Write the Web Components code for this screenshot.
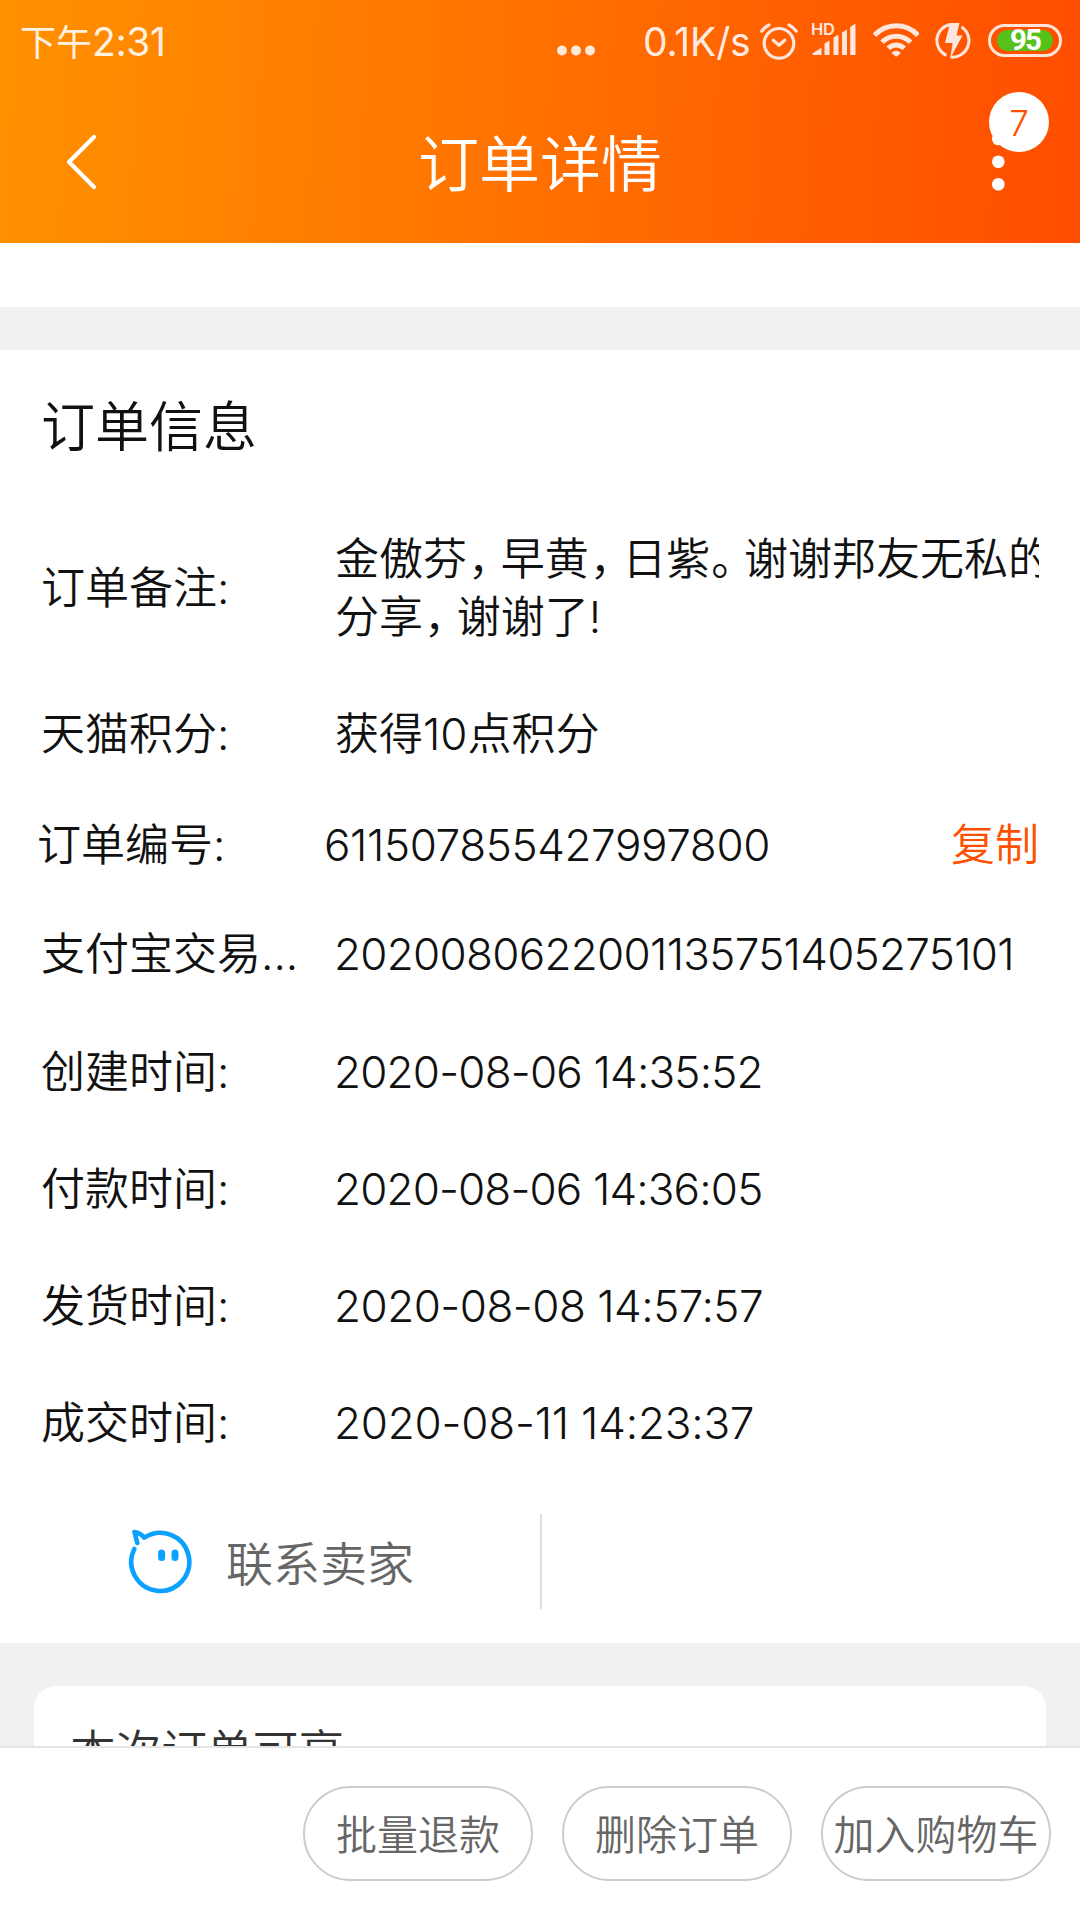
<!DOCTYPE html>
<html lang="zh-CN">
<head>
<meta charset="utf-8">
<title>订单详情</title>
<style>
  body {
    margin: 0;
    background: #fff;
  }
</style>
</head>
<body>
<order-page>
  <status-bar slot="top" time="下午2:31" speed="0.1K/s" battery="95"></status-bar>
  <nav-bar slot="top" badge="7">订单详情</nav-bar>

  <order-section heading="订单信息">
    <info-row label="订单备注:" style="--h: 170px">金傲芬<punct-mark>，</punct-mark>早黄<punct-mark>，</punct-mark>日紫<punct-mark>。</punct-mark>谢谢邦友无私的<br>分享<punct-mark>，</punct-mark>谢谢了!</info-row>
    <info-row label="天猫积分:" style="--h: 122px">获得10点积分</info-row>
    <info-row label="订单编号:" action="复制" style="--h: 99px; --left: 37px; --label: 287px; --track: -0.38px">611507855427997800</info-row>
    <info-row label="支付宝交易..." style="--h: 119px; --label: 293px; --track: -0.7px">2020080622001135751405275101</info-row>
    <info-row label="创建时间:" style="--label: 293px; --track: -0.8px">2020-08-06 14:35:52</info-row>
    <info-row label="付款时间:" style="--label: 293px; --track: -0.85px">2020-08-06 14:36:05</info-row>
    <info-row label="发货时间:" style="--label: 293px; --track: -0.5px">2020-08-08 14:57:57</info-row>
    <info-row label="成交时间:" style="--label: 293px; --track: -0.2px">2020-08-11 14:23:37</info-row>
    <contact-seller slot="footer">联系卖家</contact-seller>
  </order-section>

  <promo-card>本次订单可享</promo-card>

  <action-bar slot="bottom">
    <pill-button>批量退款</pill-button>
    <pill-button>删除订单</pill-button>
    <pill-button>加入购物车</pill-button>
  </action-bar>
</order-page>

<script>
  const define = (name, html, setup) => {
    const template = document.createElement("template");
    template.innerHTML = html;
    customElements.define(name, class extends HTMLElement {
      constructor() {
        super();
        this.attachShadow({ mode: "open" }).appendChild(template.content.cloneNode(true));
      }

      connectedCallback() {
        if (setup) setup(this, (selector) => this.shadowRoot.querySelector(selector));
      }
    });
  };

  define("order-page", `
    <style>
      :host {
        display: flex;
        flex-direction: column;
        width: 1080px;
        height: 1920px;
        overflow: hidden;
        background: #f1f1f1;
        color: #111;
        font: 350 44px/58px Inter, "Noto Sans CJK SC", sans-serif;
      }
      header {
        flex: 0 0 243px;
        color: #fff;
        background: linear-gradient(93deg, #ff9100 0%, #ff7400 45%, #ff6000 72%, #ff4d00 100%);
      }
      .previous {
        flex: 0 0 64px;
        margin-bottom: 43px;
        background: #fff;
      }
      main {
        flex: 1;
        display: flex;
        flex-direction: column;
        min-height: 0;
        overflow: hidden;
      }
    </style>
    <header><slot name="top"></slot></header>
    <main>
      <div class="previous"></div>
      <slot></slot>
    </main>
    <slot name="bottom"></slot>
  `);

  define("status-bar", `
    <style>
      :host {
        display: flex;
        align-items: center;
        height: 84px;
        padding: 0 18px 0 20px;
        box-sizing: border-box;
        color: rgba(255, 255, 255, 0.9);
        font-size: 39px;
        font-weight: 400;
        white-space: nowrap;
      }
      svg { flex: none; display: block; }
      .period { font-size: 36px; }
      .clock { letter-spacing: -0.4px; }
      .more { margin-left: auto; margin-right: 48px; }
      .speed { width: 117px; letter-spacing: -0.1px; }
      .signal { margin: 0 16px 0 13px; }
      .charge { margin-left: 16px; }
      .battery {
        display: flex;
        width: 74px;
        height: 33px;
        margin-left: 17px;
        margin-top: -3px;
        padding: 3px 6px;
        box-sizing: border-box;
        border: 3px solid #ffe6dc;
        border-radius: 17px;
      }
      .level {
        flex: 1;
        border-radius: 11px;
        background: #55c11a;
        color: #fff;
        text-align: center;
        font: 700 29.5px/21px Roboto, sans-serif;
        letter-spacing: -2px;
      }
    </style>
    <div><span class="period"></span><span class="clock"></span></div>
    <svg class="more" width="38" height="84" fill="#ffe9d9">
      <circle cx="5" cy="50.5" r="5"/><circle cx="19" cy="50.5" r="5"/><circle cx="33" cy="50.5" r="5"/>
    </svg>
    <div class="speed"></div>
    <svg width="38" height="84" fill="none" stroke="#ffe6dc" stroke-width="3.2" stroke-linecap="round" stroke-linejoin="round">
      <circle cx="19" cy="43.3" r="14.8"/>
      <path d="M13.3 40.3l5.7 5 5.7-5M1.8 31.2Q4.5 27.2 9 25M29 25q4.5 2.2 7.2 6.2"/>
    </svg>
    <svg class="signal" width="46" height="84" fill="#ffe6dc">
      <text x="0" y="34.8" font-family="Inter, sans-serif" font-size="16.5" font-weight="600" textLength="24">HD</text>
      <path d="M1.5 55v-1.5l9-6V55zM13.5 55V43.5l5-3V55zM22.5 55V37.5l5-3V55zM31 55V32.5l5-3V55zM39.2 55V27l5.3-3.5V55z"/>
    </svg>
    <svg width="46" height="84" fill="none" stroke="#ffe6dc" stroke-width="5">
      <path d="M1.5 35.3C13 22.5 33.5 22.5 45 35.3M9 42.3c8-8.2 20.5-8.2 28.5 0M15.3 48.3c4.6-4.5 11.3-4.5 15.9 0"/>
      <path fill="#ffe6dc" stroke="none" d="M18.5 53q4.7-5 9.4 0l-3.5 3q-1.2 1-2.4 0z"/>
    </svg>
    <svg class="charge" width="36" height="84" fill="none" stroke="#ffe6dc" stroke-width="3">
      <path d="M15.5 24.4A16.4 16.4 0 0 0 11.5 55.5M26.5 27A16.4 16.4 0 0 1 15.5 57"/>
      <path fill="#ffe6dc" stroke="none" d="M15 23h9.5l-3 12.5h6L15.5 58l2-15H10z"/>
    </svg>
    <div class="battery"><div class="level"></div></div>
  `, (el, $) => {
    const time = el.getAttribute("time");
    $(".period").textContent = time.slice(0, 2);
    $(".clock").textContent = time.slice(2);
    $(".speed").textContent = el.getAttribute("speed");
    $(".level").textContent = el.getAttribute("battery");
  });

  define("nav-bar", `
    <style>
      :host {
        display: grid;
        grid-template-columns: 120px 1fr 120px;
        align-items: center;
        height: 159px;
        font-size: 61px;
        line-height: 80px;
        text-align: center;
      }
      svg { display: block; }
      .title { padding-top: 2px; }
      .menu { position: relative; }
      .badge {
        position: absolute;
        left: 29px;
        top: 8px;
        width: 60px;
        height: 60px;
        border-radius: 50%;
        background: #fff;
        color: #ff5000;
        font: 300 35px/62px Inter, sans-serif;
      }
    </style>
    <svg width="120" height="159" fill="none" stroke="#fff" stroke-width="4.2" stroke-linecap="round" stroke-linejoin="round">
      <path d="M94 53L69 78l25 25"/>
    </svg>
    <div class="title"><slot></slot></div>
    <div class="menu">
      <svg width="120" height="159" fill="#fff">
        <circle cx="38.3" cy="55" r="6.3"/><circle cx="38.3" cy="77.7" r="6.3"/><circle cx="38.3" cy="100.3" r="6.3"/>
      </svg>
      <div class="badge"></div>
    </div>
  `, (el, $) => {
    $(".badge").textContent = el.getAttribute("badge");
  });

  define("order-section", `
    <style>
      :host {
        flex: none;
        display: block;
        background: #fff;
      }
      h2 {
        height: 152px;
        margin: 0;
        padding: 2px 0 0 41px;
        box-sizing: border-box;
        font: inherit;
        font-size: 54px;
        line-height: 152px;
      }
    </style>
    <h2></h2>
    <slot></slot>
    <slot name="footer"></slot>
  `, (el, $) => {
    $("h2").textContent = el.getAttribute("heading");
  });

  define("info-row", `
    <style>
      :host {
        display: flex;
        align-items: center;
        height: var(--h, 117px);
        padding: 2px 41px 0 var(--left, 41px);
        box-sizing: border-box;
        white-space: nowrap;
      }
      .label { flex: 0 0 var(--label, 294px); }
      .value {
        flex: 1;
        min-width: 0;
        overflow: hidden;
        letter-spacing: var(--track, normal);
      }
      .action { color: #ff5000; }
    </style>
    <div class="label"></div>
    <div class="value"><slot></slot></div>
    <div class="action"></div>
  `, (el, $) => {
    $(".label").textContent = el.getAttribute("label");
    $(".action").textContent = el.getAttribute("action") || "";
  });

  // full-width punctuation set tighter than its em box
  define("punct-mark", `
    <style>
      :host { letter-spacing: -11.4px; margin-right: -0.9px; }
    </style>
    <slot></slot>
  `);

  define("contact-seller", `
    <style>
      :host {
        display: flex;
        align-items: center;
        height: 163px;
        color: #666;
        font-size: 47px;
      }
      .entry {
        display: flex;
        align-items: center;
        gap: 31px;
        width: 542px;
        height: 95px;
        padding-left: 127px;
        box-sizing: border-box;
        border-right: 2px solid #ddd;
      }
      .text { padding-top: 4px; }
    </style>
    <div class="entry">
      <svg width="68" height="68" fill="none" stroke="#0aa1ff" stroke-width="4.6" stroke-linecap="round" stroke-linejoin="round">
        <path d="M10.3 15L7.5 4q6 1 9.8 5.7A29 29 0 1 1 7.3 21"/>
        <path stroke-width="7" d="M34.6 25v4.5M48 25v4.5"/>
      </svg>
      <div class="text"><slot></slot></div>
    </div>
  `);

  define("promo-card", `
    <style>
      :host {
        display: block;
        flex: none;
        height: 200px;
        margin: 43px 34px 0;
        padding: 36px;
        box-sizing: border-box;
        border-radius: 22px;
        background: #fff;
        color: #333;
        font-size: 45.7px;
        line-height: 60px;
      }
    </style>
    <slot></slot>
  `);

  define("action-bar", `
    <style>
      :host {
        flex: 0 0 174px;
        display: flex;
        justify-content: flex-end;
        align-items: flex-start;
        gap: 29px;
        padding: 38px 29px 0;
        box-sizing: border-box;
        border-top: 2px solid #e5e5e5;
        background: #fff;
      }
    </style>
    <slot></slot>
  `);

  define("pill-button", `
    <style>
      :host {
        display: flex;
        justify-content: center;
        align-items: center;
        width: 230px;
        height: 95px;
        padding-top: 2px;
        box-sizing: border-box;
        border: 2px solid #ccc;
        border-radius: 48px;
        color: #666;
        font-size: 41px;
        white-space: nowrap;
      }
    </style>
    <slot></slot>
  `);
</script>
</body>
</html>
